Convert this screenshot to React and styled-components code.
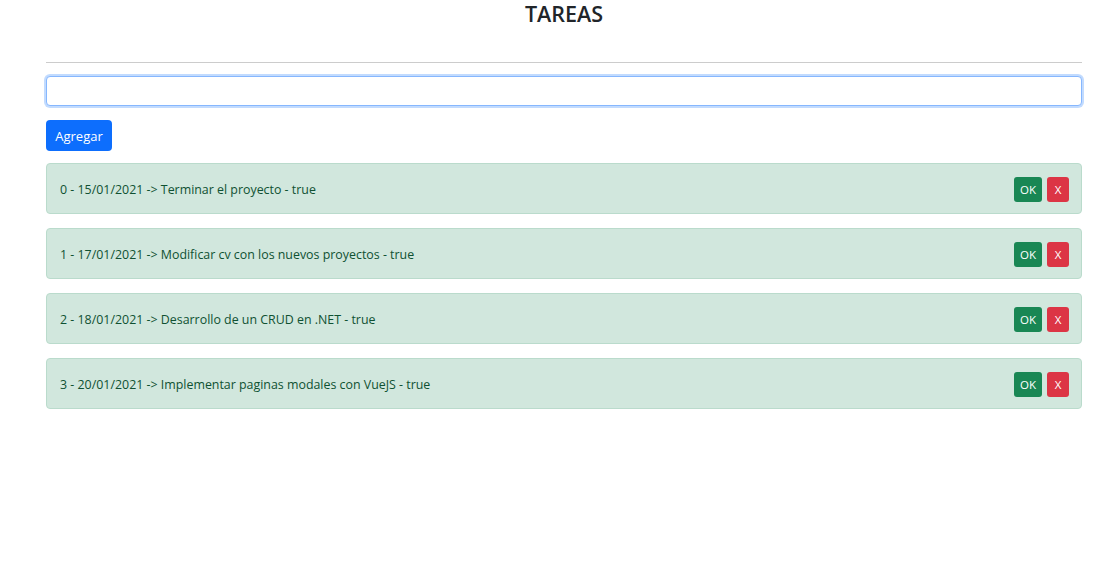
import { useState } from 'react';
import styled, { createGlobalStyle } from 'styled-components';

const GlobalStyle = createGlobalStyle`
  body {
    margin: 0;
    font-family: "Open Sans", "Noto Sans", sans-serif;
    color: #212529;
    background: #fff;
  }
  * { box-sizing: border-box; }
`;

const Container = styled.div`
  width: 1036px;
  margin-left: 46px;
`;

const Title = styled.h3`
  margin: 0;
  padding-top: 1px;
  height: 44px;
  text-align: center;
  font-size: 21.5px;
  font-weight: 600;
  line-height: 26px;
  color: #212529;
`;

const Divider = styled.hr`
  margin: 18px 0 13px;
  border: 0;
  border-top: 1px solid #ccc;
`;

const TextInput = styled.input`
  display: block;
  width: 100%;
  height: 30px;
  padding: 4px 10px;
  font: inherit;
  font-size: 14px;
  border: 1px solid #86b7fe;
  border-radius: 4px;
  outline: none;
  box-shadow: 0 0 0 2px rgba(13, 110, 253, 0.25);
  margin-bottom: 14px;
`;

const AddButton = styled.button`
  background: #0d6efd;
  color: #fff;
  border: none;
  border-radius: 4px;
  width: 66px;
  height: 31px;
  padding: 0;
  font-family: inherit;
  font-size: 13px;
  cursor: pointer;
  margin-bottom: 12px;
`;

const TaskList = styled.ul`
  list-style: none;
  padding: 0;
  margin: 0;
  display: flex;
  flex-direction: column;
  gap: 14px;
`;

const TaskItem = styled.li`
  display: flex;
  align-items: center;
  justify-content: space-between;
  height: 51px;
  padding: 1px 12px 0 13px;
  background: #d1e7dd;
  border: 1px solid #badbcc;
  border-radius: 4px;
  color: #0f5132;
  font-size: 12.4px;
`;

const Actions = styled.div`
  display: flex;
  gap: 5px;
`;

const SmallButton = styled.button`
  height: 25px;
  min-width: 22px;
  padding: 0 6px;
  border: none;
  border-radius: 3px;
  color: #fff;
  font-family: inherit;
  font-size: 11.5px;
  background: ${p => (p.$variant === 'danger' ? '#dc3545' : '#198754')};
  cursor: pointer;
`;

const initialTasks = [
  { id: 0, date: '15/01/2021', text: 'Terminar el proyecto', done: true },
  { id: 1, date: '17/01/2021', text: 'Modificar cv con los nuevos proyectos', done: true },
  { id: 2, date: '18/01/2021', text: 'Desarrollo de un CRUD en .NET', done: true },
  { id: 3, date: '20/01/2021', text: 'Implementar paginas modales con VueJS', done: true },
];

function App() {
  const [tasks] = useState(initialTasks);
  const [query, setQuery] = useState('');

  return (
    <Container>
      <GlobalStyle />
      <Title>TAREAS</Title>
      <Divider />
      <TextInput
        type="text"
        value={query}
        autoFocus
        onChange={e => setQuery(e.target.value)}
      />
      <AddButton>Agregar</AddButton>
      <TaskList>
        {tasks.map(task => (
          <TaskItem key={`task-${task.id}`}>
            <span>
              {task.id} - {task.date} -&gt; {task.text} - {String(task.done)}
            </span>
            <Actions>
              <SmallButton>OK</SmallButton>
              <SmallButton $variant="danger">X</SmallButton>
            </Actions>
          </TaskItem>
        ))}
      </TaskList>
    </Container>
  );
}

export default App;
